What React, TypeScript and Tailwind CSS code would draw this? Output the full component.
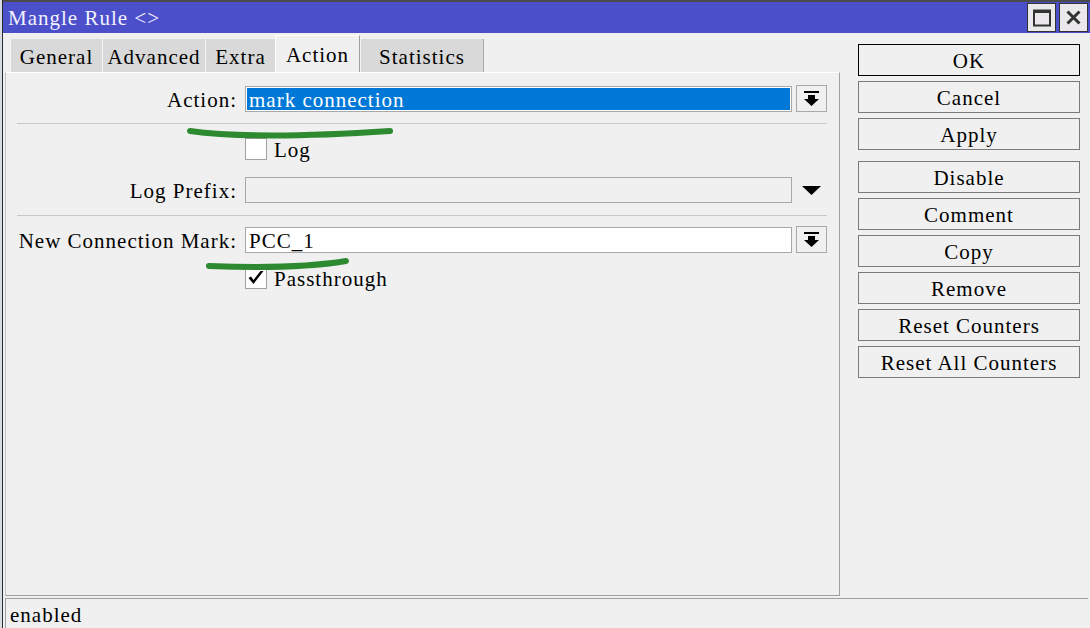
import React from "react";

const font = "font-['Liberation_Serif','Times_New_Roman',serif] text-[21px] tracking-[1px] leading-none";

const tabs = [
  { name: "General", w: "w-[92px]" },
  { name: "Advanced", w: "w-[103px]" },
  { name: "Extra", w: "w-[70px]" },
  { name: "Action", w: "w-[85px]" },
  { name: "Statistics", w: "w-[124px]" },
];

const buttons = [
  "OK",
  "Cancel",
  "Apply",
  "Disable",
  "Comment",
  "Copy",
  "Remove",
  "Reset Counters",
  "Reset All Counters",
];

function DropButton() {
  return (
    <div className="ml-[4px] w-[31px] h-[27px] border border-[#a8a8a8] bg-[#f0f0f0] flex items-center justify-center">
      <svg width="15" height="15" viewBox="0 0 15 15">
        <rect x="0" y="0" width="15" height="2" fill="#000" />
        <rect x="4" y="4" width="7" height="4" fill="#000" />
        <polygon points="0,8 15,8 7.5,15" fill="#000" />
      </svg>
    </div>
  );
}

function Checkbox({ checked }: { checked: boolean }) {
  return (
    <div className="w-[22px] h-[22px] border border-[#a0a0a0] bg-white flex items-center justify-center">
      {checked && (
        <svg width="18" height="18" viewBox="0 0 18 18">
          <path d="M1.5 9 L6.5 15 L16.5 2 L13.5 2 L6.5 11 L4 7.5 Z" fill="#000" />
        </svg>
      )}
    </div>
  );
}

export default function App() {
  return (
    <div className={`relative w-[1090px] h-[628px] overflow-hidden bg-[#f0f0f0] flex text-black ${font}`}>
      {/* strip of the window behind */}
      <div className="w-[2px] bg-[#d8dde3]" />

      <div className="flex-1 flex flex-col border-l border-[#2a2a2a]">
        {/* Title bar */}
        <div className="h-[33px] border-t-2 border-[#4a4a4a] bg-[#4b4fc9] flex items-center pl-[5px] pr-[2px]">
          <span className="flex-1 pt-[2px] text-[#f2f2ff]">Mangle Rule &lt;&gt;</span>
          <div className="flex gap-[3px]">
            <div className="w-[29px] h-[29px] bg-[#ebe8eb] border border-[#333] flex items-center justify-center">
              <svg width="18" height="18" viewBox="0 0 18 18">
                <rect x="1" y="1.5" width="16" height="15" fill="none" stroke="#333" strokeWidth="2" />
                <rect x="1" y="1" width="16" height="3" fill="#333" />
              </svg>
            </div>
            <div className="w-[29px] h-[29px] bg-[#ebe8eb] border border-[#333] flex items-center justify-center">
              <svg width="15" height="15" viewBox="0 0 15 15">
                <path d="M1.5 1.5 L13.5 13.5 M13.5 1.5 L1.5 13.5" stroke="#333" strokeWidth="3" />
              </svg>
            </div>
          </div>
        </div>

        {/* Main area */}
        <div className="flex-1 flex">
          {/* Left side: tabs and form */}
          <div className="w-[837px] flex flex-col mb-[2px]">
            <div className="h-[39px] flex items-end pl-[7px]">
              {tabs.map((t) =>
                t.name === "Action" ? (
                  <div
                    key={t.name}
                    className={`${t.w} h-[37px] pt-[2px] bg-[#f0f0f0] border-t border-l border-white border-r border-r-[#a0a0a0] flex items-center justify-center`}
                  >
                    {t.name}
                  </div>
                ) : (
                  <div
                    key={t.name}
                    className={`${t.w} h-[33px] pt-[4px] bg-[#d9d9d9] border-l border-[#f4f4f4] flex items-center justify-center ${
                      t.name === "Statistics" ? "border-r border-r-[#a8a8a8]" : ""
                    }`}
                  >
                    {t.name}
                  </div>
                )
              )}
            </div>

            <div className="flex-1 ml-[2px] border-l border-[#c4c4c4] border-t border-t-white border-r border-r-[#a0a0a0] border-b border-b-[#a0a0a0] flex flex-col">
              {/* Action */}
              <div className="mt-[12px] h-[27px] flex items-center">
                <div className="w-[239px] pr-[8px] pt-[3px] text-right">Action:</div>
                <div className="w-[547px] h-[26px] border border-[#a8a8a8] bg-[#0078d7] shadow-[inset_0_0_0_1px_#fff] flex items-center pl-[3px] pt-[3px] text-white">
                  mark connection
                </div>
                <DropButton />
              </div>

              <div className="mt-[11px] ml-[11px] mr-[12px] h-px bg-[#c8c8c8]" />

              {/* Log */}
              <div className="mt-[14px] h-[22px] flex items-center pl-[239px] gap-[7px]">
                <Checkbox checked={false} />
                <span className="pt-[3px]">Log</span>
              </div>

              {/* Log Prefix */}
              <div className="mt-[17px] h-[26px] flex items-center">
                <div className="w-[239px] pr-[8px] pt-[3px] text-right">Log Prefix:</div>
                <div className="w-[547px] h-[26px] border border-[#a8a8a8] bg-[#f0f0f0]" />
                <svg className="ml-[10px]" width="19" height="9" viewBox="0 0 19 9">
                  <polygon points="0,0 19,0 9.5,9" fill="#000" />
                </svg>
              </div>

              <div className="mt-[12px] ml-[11px] mr-[12px] h-px bg-[#c8c8c8]" />

              {/* New Connection Mark */}
              <div className="mt-[10px] h-[27px] flex items-center">
                <div className="w-[239px] pr-[8px] pt-[3px] text-right">New Connection Mark:</div>
                <div className="w-[547px] h-[26px] border border-[#a8a8a8] bg-white flex items-center pl-[3px] pt-[3px]">
                  PCC_1
                </div>
                <DropButton />
              </div>

              {/* Passthrough */}
              <div className="mt-[14px] h-[22px] flex items-center pl-[239px] gap-[7px]">
                <Checkbox checked={true} />
                <span className="pt-[3px]">Passthrough</span>
              </div>
            </div>
          </div>

          {/* Right side: buttons */}
          <div className="flex-1 pl-[18px] pt-[11px] flex flex-col gap-[5px]">
            {buttons.map((b) => (
              <div
                key={b}
                className={`w-[222px] h-[32px] shrink-0 pt-[3px] bg-[#f0f0f0] border flex items-center justify-center ${
                  b === "OK" ? "border-black" : "border-[#7a7a7a]"
                } ${b === "Disable" ? "mt-[6px]" : ""}`}
              >
                {b}
              </div>
            ))}
          </div>
        </div>

        {/* Status bar */}
        <div className="h-[30px] ml-[2px] mr-[2px] border-t border-l border-[#a0a0a0] flex items-center pl-[4px] pt-[3px]">
          enabled
        </div>
      </div>

      {/* green hand-drawn marks */}
      <svg className="absolute inset-0 pointer-events-none" width="1090" height="628" viewBox="0 0 1090 628">
        <path d="M190 131 Q 255 140 390 131" fill="none" stroke="#2e8a30" strokeWidth="6" strokeLinecap="round" />
        <path d="M209 266 C 260 268, 310 267, 346 261" fill="none" stroke="#2e8a30" strokeWidth="6" strokeLinecap="round" />
      </svg>
    </div>
  );
}
